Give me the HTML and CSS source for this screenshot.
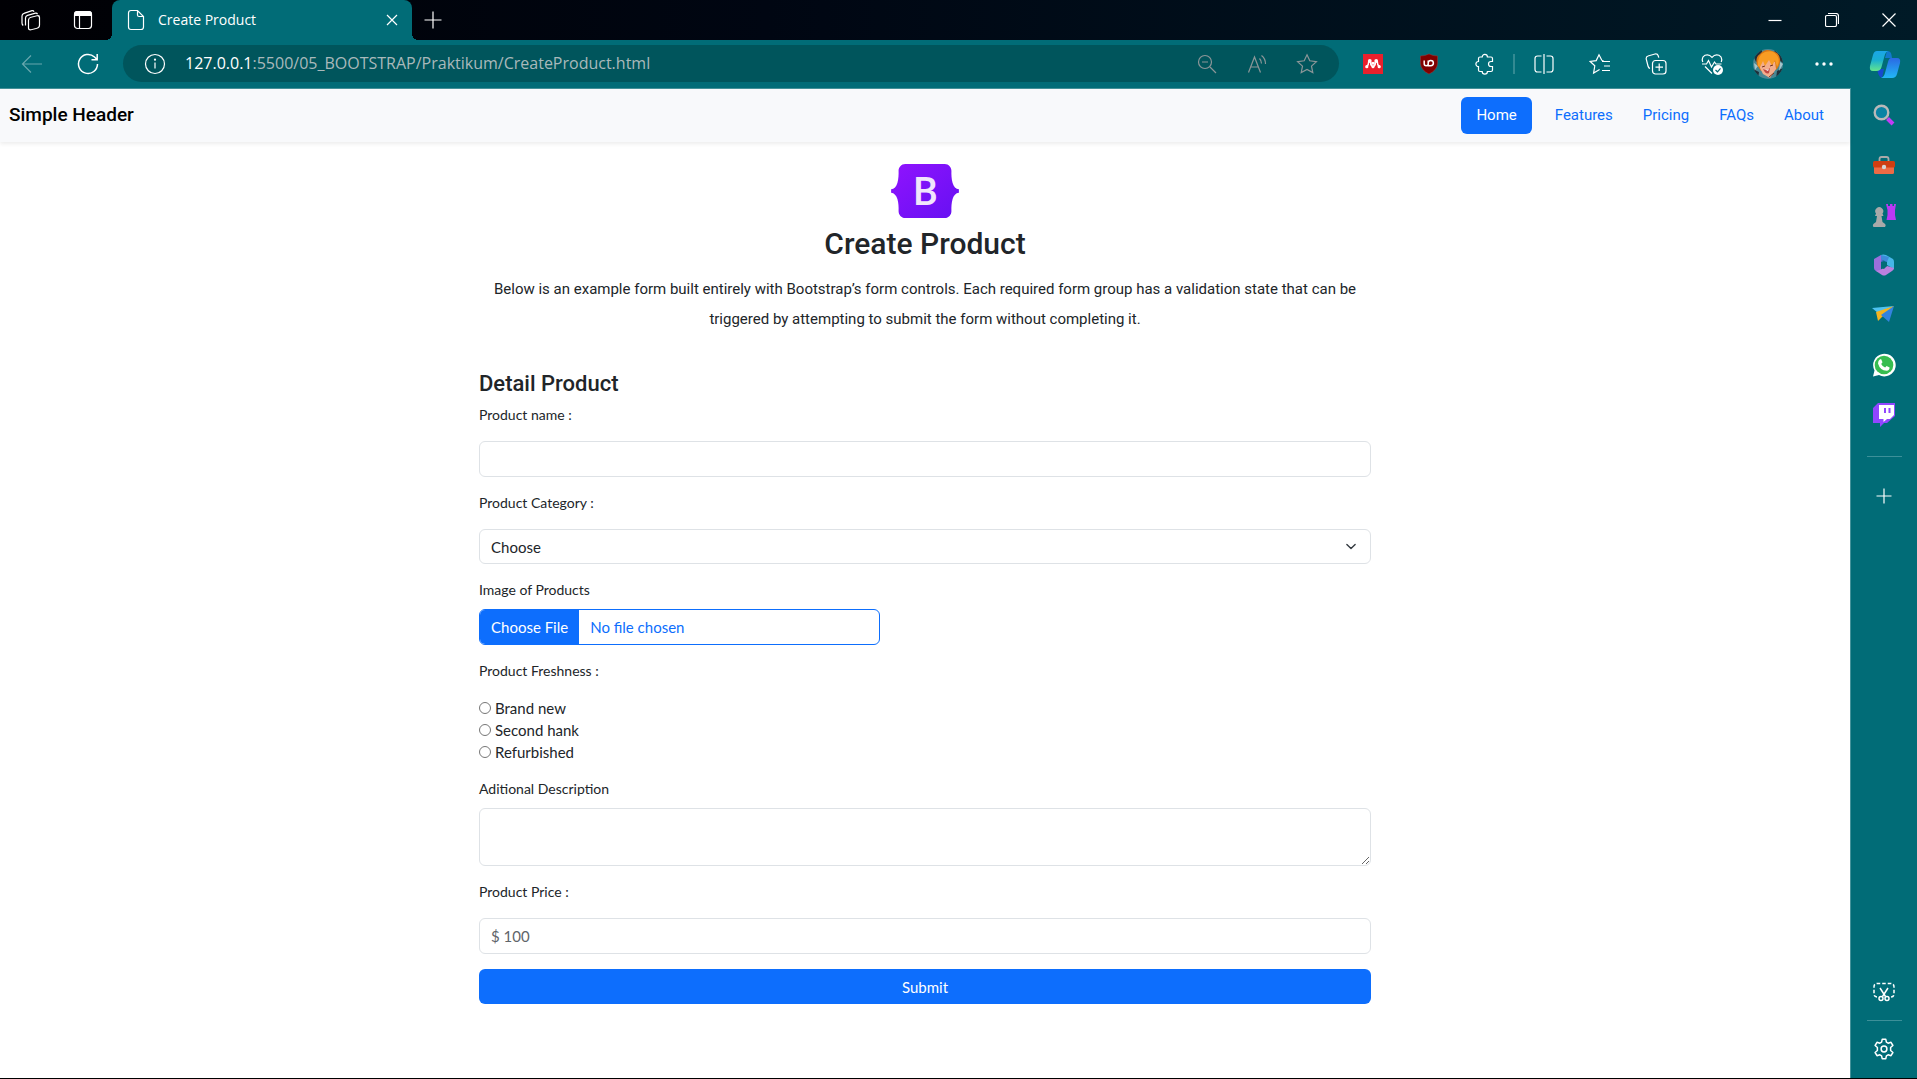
FILE: index.html
```html
<!DOCTYPE html>
<html lang="en">
<head>
<meta charset="utf-8">
<meta name="viewport" content="width=device-width, initial-scale=1">
<title>Create Product</title>
<link rel="stylesheet" href="styles.css">
</head>
<body>
<div class="browser">
  <div class="titlebar">
    <div class="titlebar-tools">
      <button class="tool" type="button" aria-label="Workspaces"><svg class="icon" width="22" height="22" viewBox="0 0 22 22"><rect x="8.5" y="7" width="11" height="12.500" rx="2.500" transform="skewY(-14) translate(0 4)"/><path d="M5.500 16.500V9q0-2 2-2.600l8-2.200q1.500-.3 2 1M2 14V7q0-2 2-2.600l8-2.700q1.500-.3 2 1M2 14q0 1.500 1.200 2.500"/></svg></button>
      <button class="tool" type="button" aria-label="Tab actions"><svg class="icon" width="20" height="20" viewBox="0 0 20 20"><rect x="1.500" y="1.500" width="17" height="17" rx="3"/><path d="M6.500 6v12"/><path class="solid" d="M1 6V4q0-3 3-3h12q3 0 3 3v2z"/></svg></button>
    </div>
    <div class="tab">
      <svg class="icon" width="18" height="22" viewBox="0 0 18 22"><path d="M4 1.500h6.500l6 6V18q0 2.500-2.500 2.500H4q-2.500 0-2.500-2.500V4q0-2.500 2.500-2.500zM10.500 1.500V6q0 1.500 1.500 1.500h4.500"/></svg>
      <span class="tab-title">Create Product</span>
      <button class="tab-close" type="button" aria-label="Close tab"><svg class="icon" width="12" height="12" viewBox="0 0 12 12"><path d="M1 1l10 10M11 1L1 11"/></svg></button>
    </div>
    <button class="tool new-tab" type="button" aria-label="New tab"><svg class="icon" width="18" height="18" viewBox="0 0 18 18"><path d="M9 0.500v17M.5 9h17"/></svg></button>
    <div class="window-buttons">
      <button class="tool" type="button" aria-label="Minimize"><svg class="icon" width="14" height="14" viewBox="0 0 14 14"><path d="M.5 7.500h13"/></svg></button>
      <button class="tool" type="button" aria-label="Restore"><svg class="icon" width="14" height="14" viewBox="0 0 14 14"><rect x=".5" y="2.500" width="11" height="11" rx="1.500"/><path d="M3 .5h8q2.500 0 2.500 2.500v8"/></svg></button>
      <button class="tool" type="button" aria-label="Close"><svg class="icon" width="14" height="14" viewBox="0 0 14 14"><path d="M.5.5l13 13M13.500.5l-13 13"/></svg></button>
    </div>
  </div>

  <div class="toolbar">
    <div class="nav-buttons">
      <button class="tool faded" type="button" aria-label="Back"><svg class="icon" width="22" height="20" viewBox="0 0 22 20"><path d="M21 10H1.500M10 1.500L1.500 10l8.500 8.500"/></svg></button>
      <button class="tool" type="button" aria-label="Refresh"><svg class="icon bold" width="22" height="22" viewBox="0 0 22 22"><path d="M20.500 11a9.500 9.500 0 1 1-3-7l2.500 2.500M20.200 1v5.700h-5.700"/></svg></button>
    </div>
    <div class="address">
      <button class="tool" type="button" aria-label="Site information"><svg class="icon" width="22" height="22" viewBox="0 0 22 22"><circle cx="11" cy="11" r="9.500"/><path d="M11 9.500v6"/><circle class="solid" cx="11" cy="6.700" r="1.100"/></svg></button>
      <span class="url"><span class="host">127.0.0.1</span>:5500/05_BOOTSTRAP/Praktikum/CreateProduct.html</span>
      <div class="address-actions">
        <button class="tool" type="button" aria-label="Zoom out"><svg class="icon" width="20" height="20" viewBox="0 0 20 20"><circle cx="8" cy="8" r="6.500"/><path d="M13 13l6 6M5 8h6"/></svg></button>
        <button class="tool" type="button" aria-label="Read aloud"><svg class="icon" width="20" height="20" viewBox="0 0 20 20"><path d="M1.500 18.500L7.500 3l6 15.500M3.500 13h8M12.500 4.500q2 2 2 5M14.500 1.500q4 3 4 8.500"/></svg></button>
        <button class="tool" type="button" aria-label="Add to favorites"><svg class="icon" width="22" height="22" viewBox="0 0 22 22"><path d="M11 1.800l2.800 6 6.600.8-4.900 4.500 1.300 6.500L11 16.400l-5.800 3.200 1.300-6.500L1.600 8.600l6.600-.8z"/></svg></button>
      </div>
    </div>
    <div class="extensions">
      <button class="tool" type="button" aria-label="Mendeley"><svg width="20" height="20" viewBox="0 0 20 20"><path fill="#e9202c" d="M0 0h20v20H0z"/><g fill="#fff"><circle cx="6.800" cy="7" r="1.900"/><circle cx="13.200" cy="7" r="1.900"/><circle cx="10" cy="9.200" r="1.500"/><circle cx="3.800" cy="12.700" r="1.600"/><circle cx="16.200" cy="12.700" r="1.600"/><circle cx="10" cy="12.700" r="1.500"/></g><path fill="none" stroke="#fff" stroke-width="1.500" d="M4 12.500q1.600-1.500 1.800-5.500M16 12.500q-1.600-1.500-1.800-5.500M8 8q-1 3 1.500 4.500M12 8q1 3-1.500 4.500"/></svg></button>
      <button class="tool" type="button" aria-label="uBlock"><svg width="20" height="22" viewBox="0 0 20 22"><path fill="#800000" stroke="#a33" stroke-width=".5" d="M10 1q4 2 8.500 2v7q0 7-8.500 11Q1.500 17 1.500 10V3Q6 3 10 1z"/><path fill="none" stroke="#fff" stroke-width="1.500" d="M5.200 7.500v3.200q0 2 2 2t2-2V7.500v5.200h2.500q2.700 0 2.700-2.600t-2.700-2.600q-2.500 0-2.500 2.600"/></svg></button>
      <button class="tool" type="button" aria-label="Extensions"><svg class="icon" width="22" height="22" viewBox="0 0 22 22"><path d="M8.200 4a2.600 2.600 0 0 1 5.200 0H17q1.500 0 1.500 1.500v3h-1.500a2.400 2.400 0 0 0 0 5h1.500v3.500q0 1.500-1.500 1.500h-3.600a2.600 2.600 0 0 1-5.200 0H6Q4.500 18.500 4.500 17v-3.300a2.600 2.600 0 0 1 0-5.200v-3Q4.500 4 6 4z"/></svg></button>
      <span class="separator"></span>
      <button class="tool" type="button" aria-label="Split screen"><svg class="icon" width="22" height="22" viewBox="0 0 22 22"><path d="M11 1v20M8.500 3H4.500Q2 3 2 5.500v11Q2 19 4.500 19h4M13.500 3h4Q20 3 20 5.500v11q0 2.500-2.500 2.500h-4"/></svg></button>
      <button class="tool" type="button" aria-label="Favorites"><svg class="icon" width="22" height="22" viewBox="0 0 22 22"><path d="M14.500 7.500L12.800 7.300 10 1.800 7.200 7.600 1.200 8.500l4.600 4.300-1.200 7.200 6-3.500M13 8.500h8M15 13h6M13 17.500h8"/></svg></button>
      <button class="tool" type="button" aria-label="Collections"><svg class="icon" width="22" height="22" viewBox="0 0 22 22"><rect x="7.500" y="7.500" width="13.500" height="13.500" rx="3"/><path d="M14.200 10.500v7.500M10.500 14.200h7.500M5 15.500Q3.500 15 3 13L1.200 6Q1 3.500 3 3l7-2q2.500-.5 3.200 1.700l.6 2"/></svg></button>
      <button class="tool" type="button" aria-label="Browser essentials"><svg class="icon" width="22" height="22" viewBox="0 0 22 22"><path d="M1.800 9Q0 4.500 4 2.300q4-1.500 7 2 3-3.500 7-2Q22 4.500 20.200 9M4 13.500l7 7M1 11h4.500l2-3.500 3 6.500 3-5 1.500 2h5.500"/><circle class="solid" cx="17" cy="17" r="5"/><path class="tick" d="M14.500 17l2 1.800 3-3.500"/></svg></button>
      <button class="tool" type="button" aria-label="Profile"><svg width="30" height="30" viewBox="0 0 30 30"><defs><clipPath id="face"><circle cx="15" cy="15" r="15"/></clipPath></defs><g clip-path="url(#face)"><path fill="#498793" d="M0 0h30v30H0z"/><path fill="#1e303a" d="M0 6L9 0v8L3 13zM21 1l9 7v6l-5-4zM0 20l6 3-1 7H0zM24 22l6-3v11h-7z"/><path fill="#a5c5cb" d="M1 14l4 3-3 4zM27 13l3 2-4 7z"/><path fill="#dd7915" d="M4 16Q2 8 7 5q5-6 12-3 7 1 8 8 1 4-3 10l-3 2H8z"/><path fill="#f3ad8c" d="M7 13l5-4 10 4 1 7-6 9-7-4-3-6z"/><path fill="#f89c23" d="M5 17Q4 6 12 3q9-3 13 5 2 4-1 10l-2-7-3 6-3-6-4 6-2-5-3 6z"/><path fill="#c14943" d="M10 20q4 2 7-1l-1 5q-3 2-6-4z"/><path fill="#fff" d="M11 20q3 1 5 0l-1 2z"/><path stroke="#733221" fill="none" d="M9 18l3-1M17 17l3-1M16 28l5-4"/></g></svg></button>
      <button class="tool" type="button" aria-label="Settings and more"><svg width="18" height="4" viewBox="0 0 18 4" fill="#fff"><circle cx="2" cy="2" r="1.700"/><circle cx="9" cy="2" r="1.700"/><circle cx="16" cy="2" r="1.700"/></svg></button>
      <button class="tool copilot" type="button" aria-label="Copilot"><svg width="32" height="28" viewBox="0 0 32 28"><defs><linearGradient id="cp1" x2="0" y2="1"><stop stop-color="#1ba5e8"/><stop offset=".45" stop-color="#19afd1"/><stop offset="1" stop-color="#63e58c"/></linearGradient><linearGradient id="cp2" x2="0" y2="1"><stop stop-color="#2a69e3"/><stop offset="1" stop-color="#22b7f5"/></linearGradient></defs><path fill="#1749cf" d="M8 19h7l-2 9q-3-1-4-5z"/><path fill="#1279cd" d="M18 1q4 0 4.500 4l.5 3h-7z"/><path fill="url(#cp1)" d="M8 1h11q-2.500 1-3.500 5l-3 11q-1 4-5 4H4q-4 0-3-5L4 5q1-4 4-4z"/><path fill="url(#cp2)" d="M22 8h6q4 0 3 5l-3 11q-1 4-5 4H12q3-1 4-5l3-11q1-4 3-4z"/></svg></button>
    </div>
  </div>

  <div class="window">
    <div class="page">
      <header class="site-header">
        <a class="brand" href="#">Simple Header</a>
        <nav class="site-nav">
          <a class="nav-link active" href="#">Home</a>
          <a class="nav-link" href="#">Features</a>
          <a class="nav-link" href="#">Pricing</a>
          <a class="nav-link" href="#">FAQs</a>
          <a class="nav-link" href="#">About</a>
        </nav>
      </header>

      <main class="container">
        <section class="intro">
          <svg class="logo" width="68" height="54" viewBox="0 0 118 94" role="img" aria-label="Bootstrap"><defs><linearGradient id="bs" x1="0" y1="0" x2="1" y2="1"><stop stop-color="#9013fe"/><stop offset="1" stop-color="#6610f2"/></linearGradient></defs><path fill="url(#bs)" d="M24.509 0c-6.733 0-11.715 5.893-11.492 12.284.214 6.140-.064 14.092-2.066 20.577C8.943 39.365 5.547 43.485 0 44.014v5.972c5.547.529 8.943 4.649 10.951 11.153 2.002 6.485 2.280 14.437 2.066 20.577C12.794 88.106 17.776 94 24.510 94H93.500c6.733 0 11.714-5.893 11.491-12.284-.214-6.140.064-14.092 2.066-20.577 2.009-6.504 5.396-10.624 10.943-11.153v-5.972c-5.547-.529-8.934-4.649-10.943-11.153-2.002-6.484-2.280-14.437-2.066-20.577C105.214 5.894 100.233 0 93.500 0H24.508z"/><text class="logo-letter" x="60" y="71" text-anchor="middle">B</text></svg>
          <h1>Create Product</h1>
          <p>Below is an example form built entirely with Bootstrap’s form controls. Each required form group has a validation state that can be triggered by attempting to submit the form without completing it.</p>
        </section>

        <form class="product-form">
          <h2>Detail Product</h2>
          <div class="field">
            <label for="name">Product name :</label>
            <input class="control" id="name" type="text">
          </div>
          <div class="field">
            <label for="category">Product Category :</label>
            <select class="control" id="category"><option>Choose</option></select>
          </div>
          <div class="field tight">
            <label for="image">Image of Products</label>
            <input class="control file" id="image" type="file">
          </div>
          <fieldset class="field">
            <legend>Product Freshness :</legend>
            <div class="choices">
              <label class="choice"><input type="radio" name="freshness">Brand new</label>
              <label class="choice"><input type="radio" name="freshness">Second hank</label>
              <label class="choice"><input type="radio" name="freshness">Refurbished</label>
            </div>
          </fieldset>
          <div class="field tight">
            <label for="description">Aditional Description</label>
            <textarea class="control" id="description"></textarea>
          </div>
          <div class="field">
            <label for="price">Product Price :</label>
            <input class="control" id="price" type="text" placeholder="$ 100">
          </div>
          <button class="submit" type="button">Submit</button>
        </form>
      </main>
    </div>

    <aside class="sidebar">
      <button class="tool" type="button" aria-label="Search"><svg width="22" height="22" viewBox="0 0 22 22"><path stroke="#c23cf5" stroke-width="4" d="M14.500 14.500l5.500 5.500"/><circle cx="8.500" cy="8.500" r="6.800" fill="#0a83a4" stroke="#b9b9b9" stroke-width="2.400"/></svg></button>
      <button class="tool" type="button" aria-label="Shopping tools"><svg width="24" height="20" viewBox="0 0 24 20"><path fill="none" stroke="#aaa" stroke-width="1.800" d="M7.500 7V4q0-2 2-2h5q2 0 2 2v3"/><rect x="2" y="7" width="20" height="12" rx="1.500" fill="#ed6a45"/><rect x="1" y="6" width="22" height="6.500" rx="1.500" fill="#cf3e12"/><circle cx="12" cy="12" r="2.200" fill="#d5d5d5"/></svg></button>
      <button class="tool" type="button" aria-label="Games"><svg width="24" height="24" viewBox="0 0 24 24"><path fill="#ba39f4" d="M14 1h2v2h2V1h2.500v2H22V1h2l-1 6v5l1 5h-9.500l1-5V7z"/><path fill="#a9a9a9" d="M1.500 24q-1.500-2 .5-3.500l2-1.500 1-6H3l1-2.500a4 4 0 1 1 6.500 0l1 2.500h-2l1 6 2 1.500q2 1.500.5 3.500z"/></svg></button>
      <button class="tool" type="button" aria-label="Microsoft 365"><svg width="22" height="22" viewBox="0 0 22 22"><path fill="#9b6fdc" d="M8 1L1 5v9q0 2 2 3l3 1q2 0 2-2V8l4-4z"/><path fill="#46b6e8" d="M8 1q2-1 5 0l7 4q1 1 1 3v7l-7-4V8L8 5z"/><path fill="#3770cf" d="M8 1v7l6 0 2-5z" opacity=".6"/><path fill="#bb80df" d="M3 17l4-1 7-4 7 2q0 2-2 3l-6 4q-2 1-4 0z"/><path fill="#016c77" d="M8 9l3-2 3 2v3l-3 3-3-1z"/></svg></button>
      <button class="tool" type="button" aria-label="Drop"><svg width="24" height="20" viewBox="0 0 24 20"><path fill="#4fc3f1" d="M0 3l22-2-16 7z"/><path fill="#f4b41f" d="M22 1L4 7l2 9 4-4z"/><path fill="#3483df" d="M22 1L9 10l8 7z"/></svg></button>
      <button class="tool" type="button" aria-label="WhatsApp"><svg width="24" height="24" viewBox="0 0 24 24"><path fill="#fff" d="M1 23.500l1.500-6A11.300 11.300 0 1 1 7 22z"/><circle cx="12" cy="12" r="9.300" fill="#38bd50"/><path fill="#fff" d="M8 6.300h1.200l1.300 3-1.300 1.700q1.300 2.600 3.900 3.600l1.500-1.600 3 1.500q0 3-3 3.200Q8 17.500 6 10.500 6 7.500 8 6.300z"/></svg></button>
      <button class="tool" type="button" aria-label="Twitch"><svg width="24" height="26" viewBox="0 0 24 26"><path fill="#9146ff" d="M6 1h17v13l-8 7h-3l-4 4v-4H1V6z"/><path fill="#fff" d="M7 3h15v10l-4 4h-3l-3.500 3v-3H7z"/><path stroke="#9146ff" stroke-width="2" d="M13 6v5M17.500 6v5"/></svg></button>
      <hr class="rule">
      <button class="tool" type="button" aria-label="Customize"><svg class="icon" width="16" height="16" viewBox="0 0 16 16"><path d="M8 .5v15M.5 8h15"/></svg></button>
      <div class="sidebar-bottom">
        <button class="tool" type="button" aria-label="Screenshot"><svg class="icon bold" width="22" height="20" viewBox="0 0 22 20"><path stroke-dasharray="3.500 2" d="M4 15q-3 0-3-3V5q0-3.500 3.500-3.500h13Q21 1.500 21 5v7q0 3-3 3"/><path d="M7 6l5.500 8.500M15 6l-5.500 8.500"/><circle cx="8" cy="16.500" r="2"/><circle cx="14" cy="16.500" r="2"/></svg></button>
        <hr class="rule">
        <button class="tool" type="button" aria-label="Settings"><svg class="icon bold" width="22" height="22" viewBox="0 0 22 22"><circle cx="11" cy="11" r="2.900"/><path d="M9.200 1.300h3.600l.6 2.900 1.700 1 2.900-.9 1.900 3.200-2.300 2v3l2.300 2-1.900 3.200-2.900-.9-1.700 1-.6 2.900H9.200l-.6-2.900-1.700-1-2.900.9-1.900-3.200 2.300-2v-3l-2.300-2L4 4.300l2.900.9 1.700-1z" stroke-linejoin="round"/></svg></button>
      </div>
    </aside>
  </div>
</div>
</body>
</html>
```
FILE: styles.css
```css
* { box-sizing: border-box; }

:root {
  --teal: #016c77;
  --teal-dark: #00555c;
  --teal-line: #44929a;
  --blue: #0d6efd;
  --ink: #212529;
  --line: #dee2e6;
}

body {
  margin: 0;
  background: #fff;
  color: var(--ink);
  font-family: Roboto, "Liberation Sans", sans-serif;
  font-size: 15px;
}

button, input, select, textarea { font: inherit; color: inherit; }

.browser {
  display: flex;
  flex-direction: column;
  min-height: 100vh;
  border-bottom: 1px solid #000;
}

/* Icons and icon buttons */
.tool, .tab-close {
  display: flex;
  align-items: center;
  justify-content: center;
  flex: none;
  width: 56px;
  padding: 0;
  border: 0;
  background: none;
  color: #fff;
}
.icon { fill: none; stroke: currentColor; stroke-width: 1.2; flex: none; }
.icon.bold { stroke-width: 1.5; }
.icon .solid { fill: currentColor; stroke: none; }
.icon .tick { stroke: var(--teal); }

/* Tab strip */
.titlebar {
  display: flex;
  height: 40px;
  background: linear-gradient(90deg, #000004, #000612 40%, #001a27);
}
.titlebar-tools { display: flex; padding: 0 3px 0 5px; }
.titlebar-tools .tool { width: 52px; }
.tab {
  position: relative;
  display: flex;
  align-items: center;
  gap: 13px;
  width: 300px;
  padding: 0 14px 0 15px;
  border-radius: 8px 8px 0 0;
  background: var(--teal);
  color: #fff;
}
.tab::before, .tab::after {
  content: "";
  position: absolute;
  bottom: 0;
  width: 6px;
  height: 6px;
}
.tab::before { left: -6px; background: radial-gradient(circle at 0 0, transparent 6px, var(--teal) 6px); }
.tab::after { right: -6px; background: radial-gradient(circle at 100% 0, transparent 6px, var(--teal) 6px); }
.tab-title { flex: 1; font-family: "Open Sans", sans-serif; font-size: 14px; line-height: 18px; }
.tab-close { width: 12px; }
.new-tab { width: 42px; }
.window-buttons { display: flex; margin-left: auto; }
.window-buttons .tool { width: 57px; }

/* Address bar */
.toolbar {
  display: flex;
  height: 48px;
  background: var(--teal);
}
.nav-buttons { display: flex; padding: 0 7px 0 4px; }
.faded { opacity: .4; }
.address {
  display: flex;
  flex: 1;
  min-width: 0;
  margin: 5px 6px 6px 0;
  padding: 0 7px 0 4px;
  border-radius: 20px;
  background: var(--teal-dark);
}
.url {
  flex: 1;
  overflow: hidden;
  padding-left: 2px;
  color: #a9b9bb;
  font-family: "Open Sans", sans-serif;
  font-size: 16px;
  line-height: 36px;
  white-space: nowrap;
}
.host { color: #fff; }
.address-actions { display: flex; }
.address-actions .tool { width: 50px; color: #8b9698; }
.extensions { display: flex; align-items: stretch; }
.separator { align-self: center; width: 2px; height: 20px; margin-right: 1px; background: #338a92; }
.extensions .copilot { width: 65px; }

/* Window body: page and side panel */
.window { display: flex; flex: 1; background: var(--teal); }
.page {
  flex: 1;
  min-width: 0;
  border-top: 1px solid var(--teal-line);
  border-right: 1px solid var(--teal-line);
  background: #fff;
}
.sidebar {
  display: flex;
  flex-direction: column;
  align-items: center;
  width: 66px;
  padding: 2px 0 4px;
}
.sidebar .tool { height: 50px; }
.sidebar-bottom { margin-top: auto; }
.sidebar-bottom .rule { margin: 3px auto; }
.rule { width: 35px; margin: 16px 0 14px; border: 0; border-top: 1px solid #3c9099; }

/* Site header */
.site-header {
  display: flex;
  align-items: flex-start;
  justify-content: space-between;
  padding: 8px 11px 8px 9px;
  background: #f8f9fb;
  box-shadow: 0 2px 4px rgba(0, 0, 0, .075);
}
.brand { color: #000; font-size: 19px; font-weight: 500; line-height: 36px; text-decoration: none; }
.site-nav { display: flex; }
.nav-link {
  padding: 0 15px;
  border-radius: 6px;
  color: var(--blue);
  line-height: 37px;
  text-decoration: none;
}
.nav-link.active { margin-right: 8px; background: var(--blue); color: #fff; }

/* Content */
.container { width: 100%; max-width: 892px; margin: 0 auto; padding: 22px 0 72px; }
.intro { text-align: center; }
.logo { display: block; margin: 0 auto 8px; }
.logo-letter { fill: #f1e5fc; font-size: 68px; font-weight: 500; }
h1 { margin: 0 0 12px; font-size: 30px; font-weight: 500; line-height: 36px; }
.intro p { margin: 0 0 36px; line-height: 30px; }
h2 { margin: 0 0 6px; font-family: Roboto, sans-serif; font-size: 22px; font-weight: 500; line-height: 28px; }

/* Form */
.product-form {
  display: flex;
  flex-direction: column;
  font-family: Lato, "Open Sans", sans-serif;
}
.field {
  display: flex;
  flex-direction: column;
  gap: 15px;
  min-width: 0;
  margin: 0 0 15px;
  padding: 0;
  border: 0;
  line-height: 22px;
}
.field.tight { gap: 8px; }
.field > label, legend { font-size: 14px; }
legend { margin: 0 0 15px; padding: 0; }
.control {
  display: block;
  width: 100%;
  height: 36px;
  margin: 0;
  padding: 0 11px;
  border: 1px solid var(--line);
  border-radius: 6px;
  background: #fff;
}
.control::placeholder { color: #5f656a; opacity: 1; }
select.control {
  height: 35px;
  appearance: none;
  background: #fff url("data:image/svg+xml,%3Csvg xmlns='http://www.w3.org/2000/svg' viewBox='0 0 16 16'%3E%3Cpath fill='none' stroke='%23343a40' stroke-linecap='round' stroke-linejoin='round' stroke-width='2' d='m2 5 6 6 6-6'/%3E%3C/svg%3E") no-repeat right 12px center / 14px 11px;
}
textarea.control { height: 58px; padding: 6px 11px; resize: both; }
.file {
  max-width: 401px;
  padding: 0;
  overflow: hidden;
  border-color: var(--blue);
  color: var(--blue);
  line-height: 34px;
}
.file::file-selector-button {
  height: 34px;
  margin: 0 11px 0 0;
  padding: 0 11px;
  border: 0;
  background: var(--blue);
  color: #fff;
  font: inherit;
}
.choices { display: flex; flex-direction: column; }
.choice { display: flex; align-items: center; gap: 4px; }
.choice input { width: 12px; height: 12px; margin: 0; }
.submit {
  height: 35px;
  border: 0;
  border-radius: 6px;
  background: var(--blue);
  color: #fff;
}
```
